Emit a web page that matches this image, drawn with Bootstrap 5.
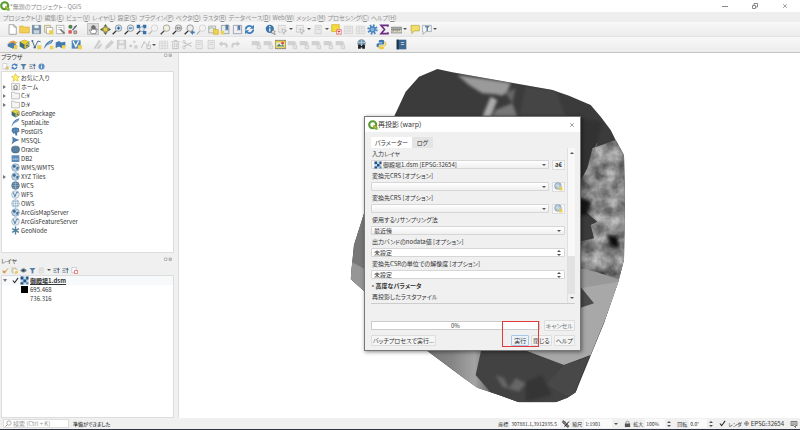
<!DOCTYPE html>
<html lang="ja">
<head>
<meta charset="utf-8">
<meta name="viewport" content="width=device-width, initial-scale=1">
<title>*無題のプロジェクト - QGIS</title>
<link href="https://cdn.jsdelivr.net/npm/bootstrap@5.3.0/dist/css/bootstrap.min.css" rel="stylesheet">
<style>
body{font:6px/9px "Noto Sans CJK JP","Noto Sans",sans-serif;font-feature-settings:"palt";color:#333;background:#f0f0f0}
svg{display:block;flex:none}
button,input,select{font:inherit;color:inherit;font-feature-settings:inherit}
.ic{width:10px;height:10px}
.tb{border:0;background:none;padding:0;width:12px;height:12px;flex:none;display:flex;align-items:center;justify-content:center}
.tb .ic{width:11px;height:11px}
.tb.on{background:#dcdcdc;border:1px solid #c4c4c4}
.tb.grp{margin-left:9px}
.off{opacity:.6}
.dd{width:0;height:0;flex:none;border:2px solid transparent;border-top-color:#555;border-bottom:0}
.dd.car{margin:0 1px}
.titlebar{height:12px;background:#fff;color:#8a8a8a;font-size:6px}
.titlebar .win{width:30px;height:12px;border:0;background:none;padding:0;display:flex;justify-content:center;align-items:center}
.menubar{height:10px;background:#eee;padding-left:3px;gap:2px}
.menubar a{color:#8c8c8c;text-decoration:none}
.toolrow{height:15px;background:linear-gradient(#f8f8f8,#ececec);border-bottom:1px solid #e3e3e3;padding-left:6px}
.toolrow.last{height:16px;border-bottom:1px solid #c4c4c4}
.work{min-height:0}
.dock{width:174px;flex:none}
.dockhead{height:8px;line-height:8px;padding:0 2px 0 1px}
.docktools{height:10px;padding-left:1px}
.docktools .tb{width:9px;height:9px}
.docktools .ic{width:7px;height:7px}
.tree{background:#fff;border:1px solid #ddd;margin:0 0 0 1px;list-style:none;padding:0}
.tree li{height:9px;display:flex;align-items:center;padding-left:1px}
.tree .ic{width:9px;height:9px;margin-right:1px}
.tree .leg{padding-left:19px;gap:1px}
.tw{width:8px;flex:none;display:flex}
.tw i{border:2px solid transparent;border-left:3px solid #777;border-right:0}
.tw i.open{border:2px solid transparent;border-top:3px solid #777;border-bottom:0}
.browsertree{height:182px;padding-top:1px!important}
.mapview{background:#fff;border-left:1px solid #ddd}
.mapview .terrain{position:absolute;left:160px;top:2px;width:300px;height:355px}
.dlg{position:absolute;left:185px;top:63px;width:217px;background:#f0f0f0;border:1px solid #777;box-shadow:1px 1px 4px #0007}
.dlghead{height:15px;background:#fff;font-size:7px;padding:0 5px 0 3px}
.dlghead .tb{width:6px}
.dlgbody{padding:5px 5px 4px 6px}
.tabs{padding-left:0}
.tabs button{border:0;height:11px;padding:0;line-height:11px;width:21px;background:#e4e4e4}
.tabs button.active{width:41px;background:#fff}
.formbox{height:156px;border-bottom:1px solid #ccc;display:flex}
.fields{flex:1;min-width:0;padding-right:2px}
.fields>*{height:11px;line-height:11px}
.fields label,.fields .adv{display:block;padding-left:1px;white-space:nowrap}
.box{height:9px;line-height:8px;border:1px solid #d6d6d6;background:#fff;padding:0 2px;border-radius:1px;flex:1;min-width:0;width:0;appearance:none;outline:0;display:block}
select.box{background:linear-gradient(#fff,#efefef)}
.fr{display:flex;align-items:center;position:relative}
.fr .dd,.fr .spin{position:absolute;right:4px}
.fr.side .dd{right:19px}
.fr.layer select{padding-left:11px}
.fr.layer .lead-ic{position:absolute;left:3px;width:8px;height:8px}
.sidebtn{width:13px;height:10px;border:1px solid #ddd;background:#f8f8f8;margin-left:3px;padding:0;line-height:7px;display:flex;justify-content:center;align-items:center}
.sidebtn .ic{width:9px;height:9px}
.spin{display:flex;flex-direction:column;gap:2px}
.spin:before,.spin:after{content:"";border:2px solid transparent;border-top:0;border-bottom-color:#555}
.spin:after{border-top:2px solid #555;border-bottom:0}
.sb{width:8px;background:linear-gradient(#f8f8f8 0 108px,#e2e2e2 108px 146px,#f0f0f0 146px);border-left:1px solid #e0e0e0;display:flex;flex-direction:column;justify-content:space-between;align-items:center;padding:4px 0}
.sb .up{transform:rotate(180deg)}
.pg{height:9px;background:#fff;border:1px solid #ccc;text-align:center;line-height:8px;flex:1}
.acts{gap:2px}
.pb{height:11px;line-height:9px;border:1px solid #ddd;background:#f5f5f5;padding:0 1px;white-space:nowrap;border-radius:1px}
.pb.run{border-color:#a9c8e6;background:#eaf2fa;padding:0 2px}
.redbox{position:absolute;left:137px;top:204px;width:37px;height:26px;border:1px solid #e03a3a}
.status{height:12px;font-size:5px;line-height:9px;border-bottom:1px solid #2b3440;padding-left:3px;padding-right:2px;white-space:nowrap}
.status .finder{width:66px;height:9px;background:#fff;border:1px solid #ddd;gap:1px;padding-left:1px;color:#888}
.status .finder input{border:0;background:none;padding:0;width:56px;font-size:6px;outline:0}
.status .finder input::placeholder{color:#999}
.status .val{border:0;background:#fafafa;padding:0 1px;height:9px;outline:0}
.status .spin{flex:none}
.readout{gap:2px}
.readout .epsg{font-size:6px}
.w-xy{width:50px}.w-scale{width:28px}.w-pct{width:20px}.w-rot{width:18px}
</style>
<script src="https://cdn.jsdelivr.net/npm/bootstrap@5.3.0/dist/js/bootstrap.bundle.min.js"></script>
</head>
<body class="vh-100 d-flex flex-column overflow-hidden">
<svg width="0" height="0" class="position-absolute" aria-hidden="true">
<defs>
<symbol id="q" viewBox="0 0 16 16"><circle cx="7.5" cy="7.5" r="5.6" fill="none" stroke="#5b9a32" stroke-width="3.4"/><path d="M8 8h3.500l4 4v3.500h-3.500l-4-4z" fill="#7cb342"/><path d="M8 8l5 5" stroke="#e6c12d" stroke-width="1.500"/></symbol>
<symbol id="new" viewBox="0 0 16 16"><path d="M3 1h7l3.500 3.500V15H3z" fill="#fff" stroke="#888"/><path d="M10 1v3.500h3.500" fill="none" stroke="#888"/></symbol>
<symbol id="folder" viewBox="0 0 16 16"><path d="M1 3h5l1 1.500h8V13H1z" fill="#f4cf58" stroke="#dcae35"/></symbol>
<symbol id="save" viewBox="0 0 16 16"><path d="M2 2h12v12H2z" fill="#7892a8" stroke="#5d7a92"/><path d="M5 2h6v4H5z" fill="#e8eef2"/><path d="M4 9h8v5H4z" fill="#c8d4dc"/></symbol>
<symbol id="saveoff" viewBox="0 0 16 16"><path d="M2 2h12v12H2z" fill="#bbb" stroke="#999"/><path d="M5 2h6v4H5zM4 9h8v5H4z" fill="#eee"/></symbol>
<symbol id="layout" viewBox="0 0 16 16"><path d="M2 2h9v10H2z" fill="#f4eccb" stroke="#a39a6b"/><path d="M5 5h9v9H5z" fill="#fff" stroke="#999"/><path d="M9 9h6v6H9z" fill="#efcf45"/></symbol>
<symbol id="laymgr" viewBox="0 0 16 16"><path d="M2 2h11v12H2z" fill="#fff" stroke="#999"/><path d="M4 5h6M4 8h6" stroke="#aaa"/><path d="M8 8l6 6" stroke="#777" stroke-width="2.500"/></symbol>
<symbol id="style" viewBox="0 0 16 16"><circle cx="5" cy="4" r="3" fill="#577f4b"/><path d="M2 9h5v5H2z" fill="#e0574f"/><path d="M14 2L8 9" stroke="#557" stroke-width="1.800"/><path d="M10 3l3 3M10 10h4v4h-4z" stroke="#777" fill="#e7ae9d" stroke-width="1.200"/></symbol>
<symbol id="hand" viewBox="0 0 16 16"><path d="M5 14L2 9l1-1 2 2V3.500h1.500V8V2H8v6V2.500h1.500V8V4H11v5l1.500-2 1 .5L11 14z" fill="#fff" stroke="#555" stroke-width=".9"/></symbol>
<symbol id="pan" viewBox="0 0 16 16"><path d="M8 0l3 4H5zM8 16l-3-4h6zM0 8l4-3v6zM16 8l-4 3V5z" fill="#5c6c3d"/><path d="M5 5h6v6H5z" fill="#e8cc3d" stroke="#7c7b3b"/></symbol>
<symbol id="zin" viewBox="0 0 16 16"><path d="M6 10l-5 5" stroke="#333" stroke-width="2"/><circle cx="9.500" cy="6" r="4.700" fill="#dce9f3" stroke="#777"/><path d="M9.500 3.500v5M7 6h5" stroke="#2467a8" stroke-width="1.600"/></symbol>
<symbol id="zout" viewBox="0 0 16 16"><path d="M6 10l-5 5" stroke="#333" stroke-width="2"/><circle cx="9.500" cy="6" r="4.700" fill="#dce9f3" stroke="#777"/><path d="M7 6h5" stroke="#2467a8" stroke-width="1.600"/></symbol>
<symbol id="zfull" viewBox="0 0 16 16"><path d="M1 1h5v5H1zM10 1h5v5h-5zM10 10h5v5h-5z" fill="#376fa8"/><path d="M6 10l-5 5" stroke="#333" stroke-width="2"/><circle cx="8.500" cy="7.500" r="3.500" fill="#e3edf5" stroke="#68839c"/></symbol>
<symbol id="zsel" viewBox="0 0 16 16"><path d="M6 10l-5 5" stroke="#888" stroke-width="1.600"/><circle cx="9.500" cy="6" r="4.700" fill="#f3f3f3" stroke="#aaa"/></symbol>
<symbol id="zlay" viewBox="0 0 16 16"><path d="M6 10l-5 5" stroke="#444" stroke-width="2"/><circle cx="9.500" cy="6" r="4.700" fill="#f3f0dd" stroke="#888"/></symbol>
<symbol id="z11" viewBox="0 0 16 16"><path d="M6 10l-5 5" stroke="#333" stroke-width="2"/><circle cx="9.500" cy="6" r="4.700" fill="#eee" stroke="#777"/><path d="M7.500 4v4M11.500 4v4M9.500 4.500v1M9.500 7v1" stroke="#444" stroke-width="1.200"/></symbol>
<symbol id="zlast" viewBox="0 0 16 16"><path d="M6 10l-5 5" stroke="#333" stroke-width="2"/><circle cx="9" cy="6" r="4.700" fill="#eee" stroke="#777"/><path d="M9 12l4-3v2h2.500v2.500H13V16z" fill="#3e79b4"/></symbol>
<symbol id="mapnew" viewBox="0 0 16 16"><path d="M1 3h10v10H1z" fill="#e8eadf" stroke="#999"/><path d="M1 7l4-2 6 3" stroke="#7ba38f" fill="none"/><path d="M8 8h7v7H8z" fill="#efd151" stroke="#d0ae32"/></symbol>
<symbol id="bookmark" viewBox="0 0 16 16"><path d="M2 2h11v12H2z" fill="#e9ecef" stroke="#788"/><path d="M8 1h4v9l-2-2-2 2z" fill="#587da4"/><path d="M1 10h5v5H1z" fill="#efd151"/></symbol>
<symbol id="bookmarks" viewBox="0 0 16 16"><path d="M2 2h12v12H2z" fill="#eef0f3" stroke="#889"/><path d="M8 2h4v8l-2-2-2 2z" fill="#587da4"/></symbol>
<symbol id="refresh" viewBox="0 0 16 16"><path d="M2.500 8a5.500 5.500 0 0 1 9.500-3.500M13.500 8a5.500 5.500 0 0 1-9.500 3.500" fill="none" stroke="#3f7fc0" stroke-width="2.600"/><path d="M14.500 1v6h-6zM1.500 15V9h6z" fill="#3f7fc0"/></symbol>
<symbol id="info" viewBox="0 0 16 16"><circle cx="7" cy="7" r="6" fill="#3e76ad"/><path d="M7 6v5M7 3v1.800" stroke="#fff" stroke-width="1.800"/><path d="M10 9l5 2-2 1 2 3-2 0-1-2-2 1z" fill="#fff" stroke="#444" stroke-width=".7"/></symbol>
<symbol id="infoc" viewBox="0 0 16 16"><circle cx="8" cy="8" r="7" fill="#5b8fc4"/><path d="M8 7v5M8 3.500v2" stroke="#fff" stroke-width="2"/></symbol>
<symbol id="gear" viewBox="0 0 16 16"><circle cx="8" cy="8" r="5.500" fill="none" stroke="#4a86c0" stroke-width="4" stroke-dasharray="2.300 2"/><circle cx="8" cy="8" r="3.600" fill="#8cb4dc" stroke="#4a86c0" stroke-width="2"/></symbol>
<symbol id="select" viewBox="0 0 16 16"><path d="M2 2h10v10H2z" fill="#e7e7e7" stroke="#888" stroke-dasharray="2 1"/><path d="M7 7l7 3-3 1-1 4z" fill="#fff" stroke="#777"/></symbol>
<symbol id="desel" viewBox="0 0 16 16"><path d="M1 1h11v10H1z" fill="#f5db3b" stroke="#cfae22"/><path d="M8 8h7v7H8z" fill="#fff" stroke="#d66"/><path d="M9.500 9.500l4 4M13.500 9.500l-4 4" stroke="#d33" stroke-width="1.500"/></symbol>
<symbol id="table" viewBox="0 0 16 16"><path d="M2 3h12v11H2zM2 6h12M2 10h12M6 3v11M10 3v11" fill="#eee" stroke="#bbb"/></symbol>
<symbol id="sigma" viewBox="0 0 16 16"><path d="M13 4V2H3l5 6-5 6h10v-2" fill="none" stroke="#6b2c83" stroke-width="2.400"/></symbol>
<symbol id="ruler" viewBox="0 0 16 16"><path d="M0 4h16v3H0z" fill="#999"/><path d="M0 8h16v5H0z" fill="#d8d8c2" stroke="#777"/><path d="M3 8v3M6 8v2M9 8v3M12 8v2" stroke="#555"/></symbol>
<symbol id="tip" viewBox="0 0 16 16"><path d="M3 2h12v8H8l-4 4v-4H3z" fill="#f2dd68" stroke="#b8a442"/></symbol>
<symbol id="anno" viewBox="0 0 16 16"><path d="M2 2h13v9H7l-4 4v-4H2z" fill="#f1f5f9" stroke="#8899a8"/><path d="M6 4h6M9 4v6" stroke="#3a5570" stroke-width="1.500"/></symbol>
<symbol id="dsrc" viewBox="0 0 16 16"><path d="M2 5l7-3 6 3-5 4z" fill="#e99b36"/><path d="M1 7l8-2 5 4-5 5-8-3z" fill="#4a7dac"/><path d="M10 9h5v6h-5z" fill="#ecce4d"/></symbol>
<symbol id="gpkg" viewBox="0 0 16 16"><path d="M8 1l7 3v7l-7 4-7-4V4z" fill="#3f6c78"/><path d="M1 4l7-3 7 3-7 4z" fill="#e9cf35"/><path d="M8 8l6-3v5l-6 4z" fill="#e2c93f"/><path d="M10 9l3-1v2l-3 1z" fill="#3f6c78"/></symbol>
<symbol id="vec" viewBox="0 0 16 16"><path d="M2 3l3.500 9L10 3l4 1" fill="none" stroke="#466b8b" stroke-width="1.400"/><circle cx="2" cy="3" r="1.500" fill="#466b8b"/><circle cx="5.500" cy="12" r="1.700" fill="#466b8b"/><path d="M9 9h6v6H9z" fill="#efd151"/></symbol>
<symbol id="feather" viewBox="0 0 16 16"><path d="M1 15C3 7 7 2 15 1c-1 5-5 7-9 8z" fill="#4d81b0"/><path d="M1 15L12 3" stroke="#dce8f1"/></symbol>
<symbol id="feathern" viewBox="0 0 16 16"><path d="M1 15C3 7 7 2 15 1c-1 5-5 7-9 8z" fill="#4d81b0"/><path d="M1 15L12 3" stroke="#dce8f1"/><path d="M10 10h5v5h-5z" fill="#efd151"/></symbol>
<symbol id="mem" viewBox="0 0 16 16"><path d="M1 5l5-2 3 2 6-1v7l-6 2-3-2-5 2z" fill="#4379b0"/><path d="M10 9h5v5h-5z" fill="#efd151"/></symbol>
<symbol id="virt" viewBox="0 0 16 16"><path d="M1 2h13v12H1z" fill="#5187b8"/><path d="M3 3l4 8 4-8" fill="none" stroke="#fff" stroke-width="1.800"/><path d="M10 9h6v6h-6z" fill="#efd151"/></symbol>
<symbol id="pencil" viewBox="0 0 16 16"><path d="M2 14l2-5 7-7 3 3-7 7z" fill="#b8b8b8" stroke="#aaa"/></symbol>
<symbol id="pencils" viewBox="0 0 16 16"><path d="M2 14L10 1l3 2-8 11zM6 14l7-8 2 2-5 6z" fill="#b4b4b4"/></symbol>
<symbol id="node" viewBox="0 0 16 16"><path d="M2 13l4-9 5 6 3-7M10 9h5v5h-5z" fill="none" stroke="#aaa" stroke-width="1.500"/></symbol>
<symbol id="dots" viewBox="0 0 16 16"><circle cx="4" cy="10" r="2" fill="#aaa"/><circle cx="9" cy="4" r="2" fill="#bbb"/><path d="M9 9h5v5H9z" fill="#bbb"/></symbol>
<symbol id="trash" viewBox="0 0 16 16"><path d="M2 4h12M6 4V2h4v2M4 5v9h8V5M7 6v6M10 6v6" fill="none" stroke="#999" stroke-width="1.300"/></symbol>
<symbol id="cut" viewBox="0 0 16 16"><path d="M3 5l11 6M3 11l11-6" stroke="#aaa" stroke-width="1.500"/><circle cx="3" cy="4" r="2" fill="none" stroke="#999"/><circle cx="3" cy="12" r="2" fill="none" stroke="#999"/></symbol>
<symbol id="page" viewBox="0 0 16 16"><path d="M3 2h9v12H3zM5 5h5M5 8h5" fill="#e6e6e6" stroke="#aaa"/></symbol>
<symbol id="undo" viewBox="0 0 16 16"><path d="M1 7l5-4v2.500h4q4 0 4 4v3h-3v-3q0-1-1-1H6V11z" fill="#b6b6b6"/></symbol>
<symbol id="redo" viewBox="0 0 16 16"><path d="M15 7l-5-4v2.500H6q-4 0-4 4v3h3v-3q0-1 1-1h4V11z" fill="#b6b6b6"/></symbol>
<symbol id="label" viewBox="0 0 16 16"><path d="M1 3h10l3 3-3 3H1z" fill="#bbb"/><path d="M9 9h5v5H9z" fill="#ddd" stroke="#aaa"/></symbol>
<symbol id="abc" viewBox="0 0 16 16"><path d="M0 2h16v12H0z" fill="#e9cd38" stroke="#667"/><path d="M2 5h12v7H2z" fill="#e8ece9"/><path d="M2 11l4-4 3 3 2-2 3 3z" fill="#4c8352"/><circle cx="11" cy="6" r="2" fill="#d84f42"/></symbol>
<symbol id="meta" viewBox="0 0 16 16"><circle cx="8" cy="6.500" r="6" fill="#7493ab"/><path d="M3 5h10M8 1v10" stroke="#c7d6e1"/><path d="M3 14V9q2-2 4 0v1h2V9q2-2 4 0v5H9v-2H7v2z" fill="#222"/></symbol>
<symbol id="py" viewBox="0 0 16 16"><path d="M8 1c-4 0-4 1-4 3v1h5v1H3c-3 0-3 6 0 6h1V9q0-1 2-1h4q2 0 2-2V3q0-2-4-2z" fill="#3c78aa"/><path d="M8 15c4 0 4-1 4-3v-1H7v-1h6c3 0 3-6 0-6v3q0 2-2 2H6q-2 0-2 2v2q0 2 4 2z" fill="#edca3f"/></symbol>
<symbol id="book" viewBox="0 0 16 16"><path d="M1 1h14v14H1z" fill="#3d688f"/><path d="M1 1h3v14H1z" fill="#1c3349"/><path d="M7 5h5M7 8h5" stroke="#b4cadb" stroke-width="1.500"/></symbol>
<symbol id="addl" viewBox="0 0 16 16"><path d="M2 1h9v12H2z" fill="#fff" stroke="#aaa"/><path d="M8 8h7v7H8z" fill="#d5c27b"/></symbol>
<symbol id="funnel" viewBox="0 0 16 16"><path d="M1 2h14l-5 6v6l-4 1V8z" fill="#5580a6"/></symbol>
<symbol id="updn" viewBox="0 0 16 16"><path d="M1 4h8M1 8h6M1 12h8" stroke="#888" stroke-width="2"/><path d="M11 14V6H8l4-5 4 5h-3v8z" fill="#4c6f99"/></symbol>
<symbol id="star" viewBox="0 0 16 16"><path d="M8 1l2.200 4.800 5 .5-3.800 3.400 1.200 5L8 12.200 3.400 14.700l1.200-5L.8 6.300l5-.5z" fill="#fff36b" stroke="#cdb32b"/></symbol>
<symbol id="home" viewBox="0 0 16 16"><path d="M1 2h5l1 1h8v11H1z" fill="#f4f4f4" stroke="#999"/><path d="M4 9l4-4 4 4M5.500 8.500V13h5V8.500" fill="none" stroke="#555" stroke-width="1.300"/></symbol>
<symbol id="drive" viewBox="0 0 16 16"><path d="M1 2h5l1 2h8v10H1z" fill="#f5f5f5" stroke="#999"/></symbol>
<symbol id="pg" viewBox="0 0 16 16"><path d="M2 2q6-2 12 0l1 6-4 2v5H8l-1-4-3 1-3-5z" fill="#4b7ba6"/><path d="M6 4v4M11 4v4" stroke="#9bb9d2"/></symbol>
<symbol id="ms" viewBox="0 0 16 16"><path d="M2 1l5 3 8 3-8 3-6 5 2-7z" fill="#4d7da6"/></symbol>
<symbol id="ora" viewBox="0 0 16 16"><rect x="1" y="2" width="14" height="12" rx="5" fill="#587f9f" stroke="#3c5f7d"/></symbol>
<symbol id="db" viewBox="0 0 16 16"><rect x="1" y="2" width="14" height="12" rx="1" fill="#5c8dbb"/><path d="M3 9h10" stroke="#c2d6e7" stroke-width="2" stroke-dasharray="3 1"/></symbol>
<symbol id="globe" viewBox="0 0 16 16"><circle cx="8" cy="8" r="6.800" fill="#bdd1e2" stroke="#5c83a5"/><path d="M3 4l4-1 2 3-3 3-3-2zM10 7l4 0-2 5-3-1z" fill="#446f96"/></symbol>
<symbol id="globed" viewBox="0 0 16 16"><circle cx="8" cy="8" r="6.800" fill="#597c9b" stroke="#385c7d"/><path d="M1 8h14M3 4h10M3 12h10M8 1v14" stroke="#a8bfd2"/></symbol>
<symbol id="globeg" viewBox="0 0 16 16"><circle cx="8" cy="8" r="6" fill="#ddd" stroke="#666" stroke-width="2"/><path d="M1 8h14M8 1v14" stroke="#666" stroke-width="1.500"/></symbol>
<symbol id="globel" viewBox="0 0 16 16"><circle cx="8" cy="8" r="6.800" fill="#f2f7fb" stroke="#7b9ebd"/><path d="M1 8h14M3 4.500h10M3 11.500h10M8 1v14M5 2q-2 6 0 12M11 2q2 6 0 12" stroke="#7b9ebd" fill="none" stroke-width=".8"/></symbol>
<symbol id="globev" viewBox="0 0 16 16"><circle cx="8" cy="8" r="6.800" fill="#e1ebf3" stroke="#7b9ebd"/><path d="M4 4l3 8 3-8h3" stroke="#456d92" fill="none" stroke-width="1.500"/></symbol>
<symbol id="geonode" viewBox="0 0 16 16"><path d="M8 1v14M2 4.500l12 7M14 4.500l-12 7" stroke="#52809f" stroke-width="2.500"/></symbol>
<symbol id="brush" viewBox="0 0 16 16"><path d="M1 8l6 1 7-7 1 1-6 7-2 5-5-2z" fill="#d99b4a"/></symbol>
<symbol id="eye" viewBox="0 0 16 16"><path d="M1 8q7-9 14 0-7 8-14 0z" fill="#7e8c99" stroke="#566"/><circle cx="8" cy="8" r="2.500" fill="#234"/></symbol>
<symbol id="rem" viewBox="0 0 16 16"><path d="M2 1h10v12H2z" fill="#fff" stroke="#999"/><path d="M8 8h7v7H8z" fill="#fff" stroke="#d44" stroke-width="1.500"/></symbol>
<symbol id="raster" viewBox="0 0 16 16"><path d="M1 1h14v14H1z" fill="#b9d2e8"/><path d="M1 1h5v5H1zM6 6h5v5H6zM11 1h4v5h-4zM1 11h5v4H1z" fill="#24507e"/><path d="M11 11h4v4h-4z" fill="#5f8bb4"/></symbol>
<symbol id="crs" viewBox="0 0 16 16"><circle cx="7" cy="7" r="6" fill="#a8bccb" stroke="#7890a3"/><path d="M1 7h12M7 1v12M3 3l8 8" stroke="#e7edf2"/><path d="M9 9h6v6H9z" fill="#e8ce55"/></symbol>
<symbol id="sat" viewBox="0 0 16 16"><path d="M2 1l6 4-3 4-4-4zM9 7l5 5-2 3-6-4z" fill="#777" stroke="#222"/><path d="M14 3L5 13" stroke="#222" stroke-width="2"/></symbol>
<symbol id="lock" viewBox="0 0 16 16"><path d="M4.500 8V5q0-3.500 3.500-3.500T11.500 5v3" fill="none" stroke="#777" stroke-width="1.800"/><path d="M2 7h12v8H2z" fill="#555"/></symbol>
<symbol id="tick" viewBox="0 0 16 16"><path d="M2 8l4 5 8-11" fill="none" stroke="#222" stroke-width="2.300"/></symbol>
<symbol id="mag" viewBox="0 0 16 16"><circle cx="9" cy="7" r="5" fill="none" stroke="#888" stroke-width="1.500"/><path d="M5 11l-4 4" stroke="#888" stroke-width="2"/></symbol>
<symbol id="bubble" viewBox="0 0 16 16"><path d="M2 3h12v8h-3v4l-4-4H2z" fill="#ddd" stroke="#555" stroke-width="1.500"/><path d="M4 6h8M4 8.500h8" stroke="#555"/></symbol>
<symbol id="floatx" viewBox="0 0 16 8"><path d="M1 1h5v5H1zM10 1h5v5h-5zM11 2l3 3M14 2l-3 3" fill="none" stroke="#888"/></symbol>
<symbol id="close" viewBox="0 0 16 16"><path d="M3 3l10 10M13 3L3 13" stroke="#666" stroke-width="1.600"/></symbol>
</defs>
</svg>

<header>
<div class="titlebar d-flex align-items-center">
<svg class="ic"><use href="#q"/></svg><span>*無題のプロジェクト - QGIS</span>
<div class="ms-auto d-flex"><button class="win" aria-label="最小化"><svg width="6" height="6"><path d="M0 3.500h6" stroke="#888"/></svg></button><button class="win" aria-label="元に戻す"><svg width="6" height="6"><path d="M.5 2.500h3v3h-3zM2 2V.500h3.500V4H4" fill="none" stroke="#888"/></svg></button><button class="win" aria-label="閉じる"><svg width="6" height="6"><use href="#close"/></svg></button></div>
</div>
<nav class="menubar d-flex align-items-center" aria-label="メニュー">
<a href="#">プロジェクト(<u>J</u>)</a><a href="#">編集(<u>E</u>)</a><a href="#">ビュー(<u>V</u>)</a><a href="#">レイヤ(<u>L</u>)</a><a href="#">設定(<u>S</u>)</a><a href="#">プラグイン(<u>P</u>)</a><a href="#">ベクタ(<u>O</u>)</a><a href="#">ラスタ(<u>R</u>)</a><a href="#">データベース(<u>D</u>)</a><a href="#">Web(<u>W</u>)</a><a href="#">メッシュ(<u>M</u>)</a><a href="#">プロセシング(<u>C</u>)</a><a href="#">ヘルプ(<u>H</u>)</a>
</nav>
<div class="toolrow d-flex align-items-center">
<button class="tb" aria-label="新規"><svg class="ic"><use href="#new"/></svg></button>
<button class="tb" aria-label="開く"><svg class="ic"><use href="#folder"/></svg></button>
<button class="tb" aria-label="保存"><svg class="ic"><use href="#save"/></svg></button>
<button class="tb" aria-label="新規レイアウト"><svg class="ic"><use href="#layout"/></svg></button>
<button class="tb" aria-label="レイアウト管理"><svg class="ic"><use href="#laymgr"/></svg></button>
<button class="tb" aria-label="スタイル管理"><svg class="ic"><use href="#style"/></svg></button>
<button class="tb on grp" aria-label="移動"><svg class="ic"><use href="#hand"/></svg></button>
<button class="tb" aria-label="選択へ移動"><svg class="ic"><use href="#pan"/></svg></button>
<button class="tb" aria-label="拡大"><svg class="ic"><use href="#zin"/></svg></button>
<button class="tb" aria-label="縮小"><svg class="ic"><use href="#zout"/></svg></button>
<button class="tb" aria-label="全域表示"><svg class="ic"><use href="#zfull"/></svg></button>
<button class="tb off" aria-label="選択を拡大"><svg class="ic"><use href="#zsel"/></svg></button>
<button class="tb" aria-label="レイヤを拡大"><svg class="ic"><use href="#zlay"/></svg></button>
<button class="tb" aria-label="等倍"><svg class="ic"><use href="#z11"/></svg></button>
<button class="tb" aria-label="前の表示"><svg class="ic"><use href="#zlast"/></svg></button>
<button class="tb off" aria-label="次の表示"><svg class="ic"><use href="#zsel"/></svg></button>
<button class="tb" aria-label="新規マップ"><svg class="ic"><use href="#mapnew"/></svg></button>
<button class="tb" aria-label="ブックマーク追加"><svg class="ic"><use href="#bookmark"/></svg></button>
<button class="tb" aria-label="ブックマーク"><svg class="ic"><use href="#bookmarks"/></svg></button>
<button class="tb" aria-label="再読み込み"><svg class="ic"><use href="#refresh"/></svg></button>
<button class="tb grp" aria-label="情報"><svg class="ic"><use href="#info"/></svg></button>
<button class="tb off" aria-label="アクション"><svg class="ic"><use href="#select"/></svg></button><i class="dd car"></i>
<button class="tb off" aria-label="選択"><svg class="ic"><use href="#select"/></svg></button><i class="dd car"></i>
<button class="tb off" aria-label="値で選択"><svg class="ic"><use href="#page"/></svg></button><i class="dd car"></i>
<button class="tb" aria-label="選択解除"><svg class="ic"><use href="#desel"/></svg></button>
<button class="tb off" aria-label="属性テーブル"><svg class="ic"><use href="#table"/></svg></button>
<button class="tb off" aria-label="計算機"><svg class="ic"><use href="#table"/></svg></button>
<button class="tb" aria-label="ツールボックス"><svg class="ic"><use href="#gear"/></svg></button>
<button class="tb" aria-label="統計"><svg class="ic"><use href="#sigma"/></svg></button>
<button class="tb" aria-label="計測"><svg class="ic"><use href="#ruler"/></svg></button><i class="dd car"></i>
<button class="tb" aria-label="地図のヒント"><svg class="ic"><use href="#tip"/></svg></button>
<button class="tb" aria-label="注記"><svg class="ic"><use href="#anno"/></svg></button><i class="dd car"></i>
</div>
<div class="toolrow last d-flex align-items-center">
<button class="tb" aria-label="データソース"><svg class="ic"><use href="#dsrc"/></svg></button>
<button class="tb" aria-label="GeoPackage作成"><svg class="ic"><use href="#gpkg"/></svg></button>
<button class="tb" aria-label="シェープファイル作成"><svg class="ic"><use href="#vec"/></svg></button>
<button class="tb" aria-label="SpatiaLite作成"><svg class="ic"><use href="#feathern"/></svg></button>
<button class="tb" aria-label="一時レイヤ"><svg class="ic"><use href="#mem"/></svg></button>
<button class="tb ms-1" aria-label="仮想レイヤ"><svg class="ic"><use href="#virt"/></svg></button>
<button class="tb off grp" aria-label="現在の編集"><svg class="ic"><use href="#pencils"/></svg></button>
<button class="tb off" aria-label="編集"><svg class="ic"><use href="#pencil"/></svg></button>
<button class="tb off" aria-label="編集を保存"><svg class="ic"><use href="#saveoff"/></svg></button>
<button class="tb off" aria-label="地物追加"><svg class="ic"><use href="#dots"/></svg></button>
<button class="tb off" aria-label="頂点"><svg class="ic"><use href="#node"/></svg></button><i class="dd car"></i>
<button class="tb off" aria-label="属性変更"><svg class="ic"><use href="#table"/></svg></button>
<button class="tb off" aria-label="削除"><svg class="ic"><use href="#trash"/></svg></button>
<button class="tb off" aria-label="切り取り"><svg class="ic"><use href="#cut"/></svg></button>
<button class="tb off" aria-label="コピー"><svg class="ic"><use href="#page"/></svg></button>
<button class="tb off" aria-label="貼り付け"><svg class="ic"><use href="#page"/></svg></button>
<button class="tb off" aria-label="元に戻す"><svg class="ic"><use href="#undo"/></svg></button>
<button class="tb off" aria-label="やり直す"><svg class="ic"><use href="#redo"/></svg></button>
<button class="tb off grp" aria-label="ラベル"><svg class="ic"><use href="#label"/></svg></button>
<button class="tb off" aria-label="ダイアグラム"><svg class="ic"><use href="#label"/></svg></button>
<button class="tb" aria-label="ラベル設定"><svg class="ic"><use href="#abc"/></svg></button>
<button class="tb off" aria-label="ラベル固定"><svg class="ic"><use href="#label"/></svg></button>
<button class="tb off" aria-label="ラベル表示"><svg class="ic"><use href="#label"/></svg></button>
<button class="tb off" aria-label="ラベル移動"><svg class="ic"><use href="#label"/></svg></button>
<button class="tb off" aria-label="ラベル回転"><svg class="ic"><use href="#label"/></svg></button>
<button class="tb off" aria-label="ラベル変更"><svg class="ic"><use href="#label"/></svg></button>
<button class="tb grp" aria-label="MetaSearch"><svg class="ic"><use href="#meta"/></svg></button>
<button class="tb ms-2" aria-label="Python"><svg class="ic"><use href="#py"/></svg></button>
<button class="tb ms-2" aria-label="ヘルプ"><svg class="ic"><use href="#book"/></svg></button>
</div>
</header>

<div class="work flex-grow-1 d-flex">
<aside class="dock d-flex flex-column">
<div class="dockhead d-flex justify-content-between"><span>ブラウザ</span><svg width="8" height="5"><use href="#floatx"/></svg></div>
<div class="docktools d-flex align-items-center">
<button class="tb" aria-label="追加"><svg class="ic"><use href="#addl"/></svg></button><button class="tb" aria-label="再読み込み"><svg class="ic"><use href="#refresh"/></svg></button><button class="tb" aria-label="フィルタ"><svg class="ic"><use href="#funnel"/></svg></button><button class="tb" aria-label="折りたたむ"><svg class="ic"><use href="#updn"/></svg></button><button class="tb" aria-label="プロパティ"><svg class="ic"><use href="#infoc"/></svg></button>
</div>
<ul class="tree browsertree">
<li><span class="tw"></span><svg class="ic"><use href="#star"/></svg>お気に入り</li>
<li><span class="tw"><i></i></span><svg class="ic"><use href="#home"/></svg>ホーム</li>
<li><span class="tw"><i></i></span><svg class="ic"><use href="#drive"/></svg>C:¥</li>
<li><span class="tw"><i></i></span><svg class="ic"><use href="#drive"/></svg>D:¥</li>
<li><span class="tw"></span><svg class="ic"><use href="#gpkg"/></svg>GeoPackage</li>
<li><span class="tw"></span><svg class="ic"><use href="#feather"/></svg>SpatiaLite</li>
<li><span class="tw"></span><svg class="ic"><use href="#pg"/></svg>PostGIS</li>
<li><span class="tw"></span><svg class="ic"><use href="#ms"/></svg>MSSQL</li>
<li><span class="tw"></span><svg class="ic"><use href="#ora"/></svg>Oracle</li>
<li><span class="tw"></span><svg class="ic"><use href="#db"/></svg>DB2</li>
<li><span class="tw"></span><svg class="ic"><use href="#globe"/></svg>WMS/WMTS</li>
<li><span class="tw"><i></i></span><svg class="ic"><use href="#globe"/></svg>XYZ Tiles</li>
<li><span class="tw"></span><svg class="ic"><use href="#globed"/></svg>WCS</li>
<li><span class="tw"></span><svg class="ic"><use href="#globev"/></svg>WFS</li>
<li><span class="tw"></span><svg class="ic"><use href="#globel"/></svg>OWS</li>
<li><span class="tw"></span><svg class="ic"><use href="#globe"/></svg>ArcGisMapServer</li>
<li><span class="tw"></span><svg class="ic"><use href="#globev"/></svg>ArcGisFeatureServer</li>
<li><span class="tw"></span><svg class="ic"><use href="#geonode"/></svg>GeoNode</li>
</ul>
<div class="dockhead d-flex justify-content-between mt-1"><span>レイヤ</span><svg width="8" height="5"><use href="#floatx"/></svg></div>
<div class="docktools d-flex align-items-center">
<button class="tb" aria-label="スタイル"><svg class="ic"><use href="#brush"/></svg></button><button class="tb" aria-label="グループ追加"><svg class="ic"><use href="#layout"/></svg></button><button class="tb" aria-label="表示管理"><svg class="ic"><use href="#eye"/></svg></button><button class="tb" aria-label="フィルタ"><svg class="ic"><use href="#funnel"/></svg></button><button class="tb off" aria-label="式フィルタ"><svg class="ic"><use href="#page"/></svg></button><i class="dd car"></i><button class="tb" aria-label="全展開"><svg class="ic"><use href="#updn"/></svg></button><button class="tb" aria-label="全折りたたみ"><svg class="ic"><use href="#updn"/></svg></button><button class="tb" aria-label="レイヤ削除"><svg class="ic"><use href="#rem"/></svg></button>
</div>
<ul class="tree flex-grow-1">
<li class="bg-body-tertiary"><span class="tw"><i class="open"></i></span><svg width="9" height="7"><use href="#tick"/></svg><svg class="ic"><use href="#raster"/></svg><b><u>御殿場1.dsm</u></b></li>
<li class="leg"><svg width="8" height="8"><path d="M0 0h7v7H0z" fill="#000"/></svg>695.468</li>
<li class="leg"><svg width="8" height="8"><path d="M0 0h7v7H0z" fill="#fff"/></svg>736.316</li>
</ul>
</aside>

<main class="mapview flex-grow-1 position-relative overflow-hidden ms-1">
<svg class="terrain" viewBox="0 0 900 1065" role="img" aria-label="標高ラスタ">
<defs>
<clipPath id="edge"><path d="M295 42L340 52L510 82L640 105L690 122L755 150L785 185L815 225L830 255L855 300L858 440L855 615L838 680L795 805L710 1012L685 1028L650 1042H540L480 1020L415 998L375 970L245 873L75 708L35 672L38 640L45 570L80 460L165 185L200 110L240 65Z"/></clipPath>
<clipPath id="trees"><path d="M760 280L830 255L870 300V690L800 680L770 650L740 655L720 640V560L765 550L755 510L775 500L740 470L720 440V385L745 340Z"/></clipPath>
<linearGradient id="slope" x1="0" x2="1"><stop offset="0" stop-color="#6a6a6a"/><stop offset=".3" stop-color="#858585"/><stop offset=".45" stop-color="#a4a4a4"/><stop offset=".56" stop-color="#666"/><stop offset="1" stop-color="#484848"/></linearGradient>
<filter id="soft"><feGaussianBlur stdDeviation="5"/></filter>
<filter id="rough" x="0" y="0" width="100%" height="100%" color-interpolation-filters="sRGB"><feTurbulence type="fractalNoise" baseFrequency=".025" numOctaves="4" seed="8"/><feColorMatrix values=".7 0 0 0 .18 .7 0 0 0 .18 .7 0 0 0 .18 0 0 0 0 1"/></filter>
</defs>
<g clip-path="url(#edge)">
<path d="M0 0h900v1065H0z" fill="#3b3b3b"/>
<path d="M0 400H110V740H0z" fill="#777"/><path d="M0 600L110 660V740H0z" fill="#969696"/>
<g filter="url(#soft)"><path d="M560 95L650 105L680 185H540z" fill="#454545"/>
<path d="M700 185L790 200L740 400L715 420z" fill="#333"/></g>
<g clip-path="url(#trees)"><path d="M300 30h600v800H300z" fill="#888" filter="url(#rough)"/></g>
<g filter="url(#soft)"><path d="M355 60L515 83L505 110L490 122L470 118L430 115L390 90Z" fill="#9a9a9a"/><path d="M455 125L475 135L455 185H430Z" fill="#aaa"/><path d="M470 165L520 145L535 185H460Z" fill="#777"/><path d="M500 115L530 100L520 145Z" fill="#666"/>
<path d="M720 425L755 440L745 480H720z" fill="#151515"/><path d="M805 540L835 545L840 580L815 570z" fill="#080808"/></g>
<path d="M720 640L770 650L860 680L830 720L715 810z" fill="#999"/><path d="M720 700L840 680L800 790L710 830z" fill="#a8a8a8"/><path d="M720 690L765 745L720 760z" fill="#4b4b4b"/>
<path d="M200 860H530L660 1065H200z" fill="url(#slope)"/>
<path d="M520 860L690 930L720 1010L660 1065H500L410 960L430 870z" fill="#424242"/>
<path d="M495 865L700 800L800 790L755 900L675 930L570 890z" fill="#a8a8a8"/>
<path d="M675 930L750 905L700 1030L620 990z" fill="#484848"/>
<g filter="url(#soft)"><path d="M470 960L495 970L510 1000L530 970L560 985L540 1010L490 995z" fill="#666"/><path d="M560 980L610 960L640 1020L560 1040z" fill="#363636"/></g>
<path d="M775 265L760 295" stroke="#888" stroke-width="2"/>
</g>
</svg>

<section class="dlg" role="dialog" aria-label="再投影（warp）">
<div class="dlghead d-flex align-items-center"><svg class="ic"><use href="#q"/></svg>再投影（warp）<button class="tb ms-auto" aria-label="閉じる"><svg width="6" height="6"><use href="#close"/></svg></button></div>
<div class="dlgbody">
<div class="tabs d-flex" role="tablist"><button class="active" role="tab" aria-selected="true">パラメーター</button><button role="tab" aria-selected="false">ログ</button></div>
<div class="formbox overflow-hidden">
<div class="fields">
<label for="f1">入力レイヤ</label>
<div class="fr side layer"><select id="f1" class="box"><option>御殿場1.dsm [EPSG:32654]</option></select><svg class="lead-ic"><use href="#raster"/></svg><i class="dd"></i><button class="sidebtn"><b>a€</b></button></div>
<label for="f2">変換元CRS [オプション]</label>
<div class="fr side"><select id="f2" class="box"><option></option></select><i class="dd"></i><button class="sidebtn" aria-label="CRS選択"><svg class="ic"><use href="#crs"/></svg></button></div>
<label for="f3">変換先CRS [オプション]</label>
<div class="fr side"><select id="f3" class="box"><option></option></select><i class="dd"></i><button class="sidebtn" aria-label="CRS選択"><svg class="ic"><use href="#crs"/></svg></button></div>
<label for="f4">使用するリサンプリング法</label>
<div class="fr"><select id="f4" class="box"><option>最近傍</option></select><i class="dd"></i></div>
<label for="f5">出力バンドのnodata値 [オプション]</label>
<div class="fr"><input id="f5" class="box" value="未設定"><span class="spin"></span></div>
<label for="f6">変換先CSRの単位での解像度 [オプション]</label>
<div class="fr"><input id="f6" class="box" value="未設定"><span class="spin"></span></div>
<div class="adv fw-bold">‣ 高度なパラメータ</div>
<label for="f7">再投影したラスタファイル</label>
<div class="fr"><input id="f7" class="box" value="[一時ファイルに保存]"></div>
</div>
<div class="sb"><i class="dd up"></i><i class="dd"></i></div>
</div>
<div class="d-flex align-items-center gap-1 mt-3"><div class="pg" role="progressbar" aria-label="進捗" aria-valuenow="0">0%</div><button class="pb text-secondary" disabled>キャンセル</button></div>
<div class="acts d-flex align-items-center mt-1"><button class="pb">バッチプロセスで実行...</button><button class="pb run ms-auto">実行</button><button class="pb">閉じる</button><button class="pb">ヘルプ</button></div>
</div>
<div class="redbox"></div>
</section>
</main>
</div>

<footer class="status d-flex align-items-center">
<div class="finder d-flex align-items-center"><svg width="7" height="7"><use href="#mag"/></svg><input aria-label="検索" placeholder="検索 (Ctrl + K)"></div>
<span class="ms-1 text-black">準備ができました</span>
<div class="readout ms-auto d-flex align-items-center">
<label for="s1">座標</label><input id="s1" class="val w-xy" value="307881.1,3912935.5"><svg width="8" height="8"><use href="#sat"/></svg>
<label for="s2">縮尺</label><input id="s2" class="val w-scale" value="1:1901"><i class="dd me-1"></i><svg width="7" height="8"><use href="#lock"/></svg>
<label for="s3">拡大</label><input id="s3" class="val w-pct" value="100%"><span class="spin me-1"></span>
<label for="s4">回転</label><input id="s4" class="val w-rot" value="0.0°"><span class="spin me-1"></span>
<svg width="7" height="7"><use href="#tick"/></svg><span>レンダ</span><svg width="5" height="5"><use href="#globeg"/></svg><span class="epsg">EPSG:32654</span><svg width="8" height="8" class="ms-1"><use href="#bubble"/></svg>
</div>
</footer>
</body>
</html>
